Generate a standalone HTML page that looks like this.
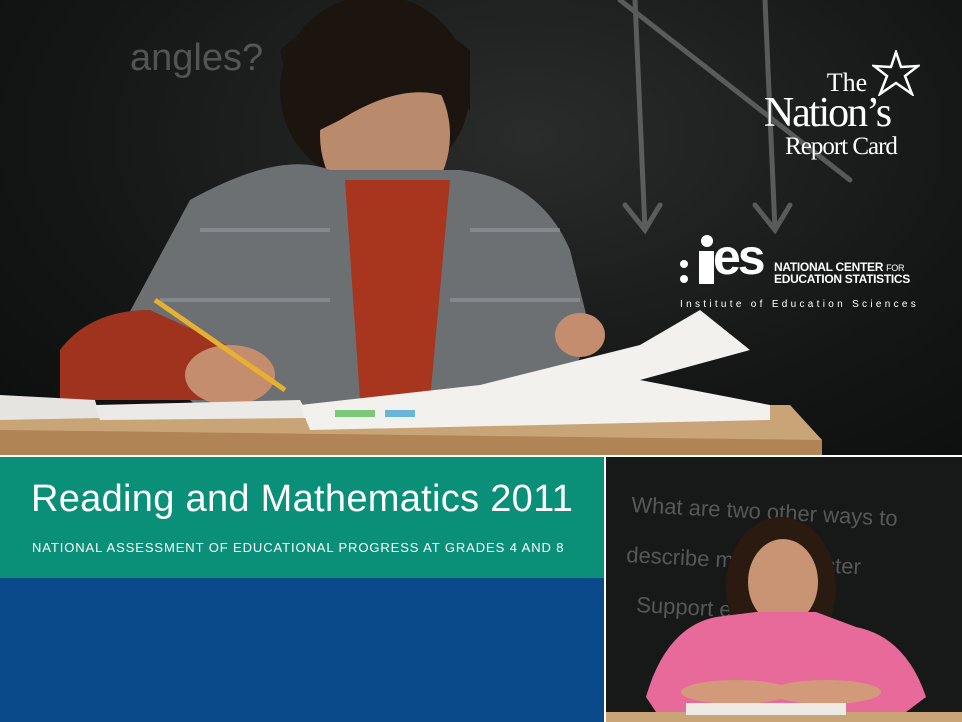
<!DOCTYPE html>
<html><head><meta charset="utf-8"><style>
html,body{margin:0;padding:0;width:962px;height:722px;overflow:hidden;background:#fff;font-family:"Liberation Sans",sans-serif}
.abs{position:absolute}
</style></head><body>
<div class="abs" style="left:0;top:0;width:962px;height:455px;background:radial-gradient(ellipse at 55% 30%,#2a2c2c 0%,#151717 60%,#0c0d0d 100%);overflow:hidden">
<svg width="962" height="455" class="abs" style="left:0;top:0">
 <g stroke="#8a8c8c" stroke-width="5" fill="none" opacity=".55" stroke-linecap="round">
  <line x1="635" y1="0" x2="645" y2="230"/><line x1="765" y1="0" x2="775" y2="230"/>
  <line x1="620" y1="0" x2="850" y2="180"/>
  <path d="M625 205 L645 230 L660 205"/><path d="M755 205 L775 230 L790 205"/>
 </g>
 <text x="130" y="70" fill="#7a7c7c" font-size="38" font-family="Liberation Sans" opacity=".6">angles?</text>
 <!-- boy -->
 <ellipse cx="375" cy="90" rx="95" ry="95" fill="#1c140f"/>
 <ellipse cx="385" cy="135" rx="65" ry="80" fill="#b98a6c"/>
 <path d="M280 50 Q370 -30 470 50 L470 110 Q420 70 340 120 L300 140 Z" fill="#1c140f"/>
 <path d="M190 200 Q280 150 330 170 L460 170 Q540 180 570 250 L590 330 L560 410 L200 410 L120 330 Z" fill="#6c7073"/>
 <g stroke="#9aa0a6" stroke-width="4" opacity=".5"><line x1="200" y1="230" x2="330" y2="230"/><line x1="470" y1="230" x2="560" y2="230"/><line x1="160" y1="300" x2="330" y2="300"/><line x1="450" y1="300" x2="580" y2="300"/></g>
 <path d="M345 180 L450 180 L430 400 L360 400 Z" fill="#a8361e"/>
 <path d="M60 350 Q90 310 150 310 L260 360 L240 400 L60 400 Z" fill="#a0331d"/>
 <ellipse cx="230" cy="375" rx="45" ry="30" fill="#c48e6e"/>
 <ellipse cx="580" cy="335" rx="25" ry="22" fill="#c48e6e"/>
 <line x1="155" y1="300" x2="285" y2="390" stroke="#e8b030" stroke-width="5"/>
 <!-- desk -->
 <path d="M0 405 L790 405 L822 440 L822 455 L0 455 Z" fill="#c9a477"/>
 <path d="M0 430 L822 440 L822 455 L0 455 Z" fill="#b08454"/>
 <path d="M0 395 L95 400 L100 418 L0 420 Z" fill="#e6e4e0"/>
 <path d="M95 405 L300 400 L310 418 L100 420 Z" fill="#eceae6"/>
 <path d="M300 405 L480 385 L640 345 L700 310 L750 350 L640 380 L770 405 L770 420 L310 430 Z" fill="#f2f1ee"/>
 <rect x="335" y="410" width="40" height="7" fill="#7dc97a"/><rect x="385" y="410" width="30" height="7" fill="#6ab6d8"/>
</svg>
<div class="abs" style="left:752px;top:70px;width:150px;color:#fff;font-family:'Liberation Serif',serif;text-align:center;line-height:1">
 <div style="font-size:26px;margin-left:40px">The</div>
 <div style="font-size:42px;letter-spacing:-2px;margin-top:-4px">Nation’s</div>
 <div style="font-size:25px;letter-spacing:-1px;margin-left:28px">Report Card</div>
</div>
<svg class="abs" style="left:872px;top:50px" width="48" height="46"><polygon points="24,2 29,17 46,16 33,26 40,44 24,33 8,44 15,26 2,16 19,17" fill="none" stroke="#fff" stroke-width="2.5"/></svg>
<div class="abs" style="left:680px;top:235px;color:#fff">
 <div style="position:absolute;left:0;top:25px;width:8px;height:8px;border-radius:50%;background:#fff"></div>
 <div style="position:absolute;left:0;top:40px;width:8px;height:8px;border-radius:50%;background:#fff"></div>
 <div style="position:absolute;left:21px;top:0px;width:12px;height:12px;border-radius:50%;background:#fff"></div>
 <div style="position:absolute;left:19px;top:16px;width:15px;height:33px;background:#fff"></div>
 <div style="position:absolute;left:33px;top:-3px;font-size:50px;font-weight:bold;letter-spacing:-3px;line-height:1;font-family:'Liberation Sans Narrow','Liberation Sans',sans-serif">es</div>
 <div style="position:absolute;left:94px;top:27px;font-size:12px;font-weight:bold;line-height:11px;white-space:nowrap;letter-spacing:-0.3px">NATIONAL CENTER <span style="font-size:9px;font-weight:normal">FOR</span><br>EDUCATION STATISTICS</div>
 <div style="position:absolute;left:0;top:64px;font-size:10px;letter-spacing:3.3px;white-space:nowrap">Institute of Education Sciences</div>
</div>
</div>
<div class="abs" style="left:0;top:457px;width:604px;height:121px;background:#0a8f78;color:#fff">
 <div style="position:absolute;left:31px;top:21px;font-size:38px;letter-spacing:0.3px;white-space:nowrap">Reading and Mathematics 2011</div>
 <div style="position:absolute;left:32px;top:83px;font-size:13px;letter-spacing:0.9px;white-space:nowrap">NATIONAL ASSESSMENT OF EDUCATIONAL PROGRESS AT GRADES 4 AND 8</div>
</div>
<div class="abs" style="left:0;top:578px;width:604px;height:144px;background:#0a4a8a"></div>
<div class="abs" style="left:606px;top:457px;width:356px;height:265px;background:#171919;overflow:hidden">
<svg width="356" height="265">
 <g fill="#8a8c8c" opacity=".55" font-family="Liberation Sans" font-size="22">
  <text x="25" y="55" transform="rotate(3 25 55)">What are two other ways to</text>
  <text x="20" y="105" transform="rotate(3 20 105)">describe main character</text>
  <text x="30" y="155" transform="rotate(3 30 155)">Support  er with life</text>
 </g>
 <ellipse cx="175" cy="130" rx="55" ry="70" fill="#2a1a10"/>
 <ellipse cx="177" cy="125" rx="35" ry="43" fill="#c99474"/>
 <path d="M40 240 Q60 170 110 160 L150 155 L210 155 L250 170 Q300 180 320 240 L300 255 L50 255 Z" fill="#e86a9a"/>
 <ellipse cx="130" cy="235" rx="55" ry="12" fill="#d29a7a"/>
 <ellipse cx="220" cy="235" rx="55" ry="12" fill="#d29a7a"/>
 <rect x="0" y="255" width="356" height="10" fill="#c9a477"/>
 <rect x="80" y="246" width="160" height="12" fill="#eeeae4"/>
</svg>
</div>
</body></html>
